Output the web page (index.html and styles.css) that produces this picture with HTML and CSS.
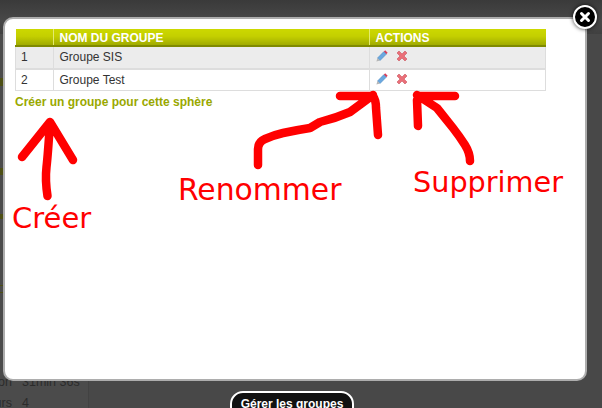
FILE: index.html
```
<!DOCTYPE html>
<html lang="fr">
<head>
  <meta charset="UTF-8" />
  <title>Gérer les groupes</title>
  <link rel="stylesheet" href="styles.css">
</head>
<body>
  <!-- page behind the overlay -->
  <div class="page">
    <div class="page-top"></div>
    <div class="page-body">
      <div class="sidebar">
        <div class="mark mark-a"></div>
        <div class="mark mark-b"></div>
        <div class="mark mark-c"></div>
        <div class="mark mark-d"></div>
        <div class="mark mark-e"></div>
        <div class="stat stat-first"><span class="stat-label">Session</span><span>31min 36s</span></div>
        <div class="stat"><span class="stat-label">Visiteurs</span><span>4</span></div>
      </div>
      <div class="main">
        <a href="#" class="manage-button">Gérer les groupes</a>
      </div>
    </div>
  </div>

  <div class="modal">
    <table class="groups">
      <thead>
        <tr>
          <th class="col-id"></th>
          <th class="col-name">NOM DU GROUPE</th>
          <th>ACTIONS</th>
        </tr>
      </thead>
      <tbody>
        <tr class="odd">
          <td>1</td>
          <td>Groupe SIS</td>
          <td class="actions">
            <svg class="icon" viewBox="0 0 12 12"><path d="M9.200 .3l2.500 2.500-1.500 1.500-2.500-2.500z" fill="#d8405c"/><path d="M7.700 1.800l2.500 2.500-6.200 6.200-2.500-2.500z" fill="#6aa8e0" stroke="#4a86c0" stroke-width=".6"/><path d="M1.500 8l2.500 2.500-3.600 1.100z" fill="#b5b5b5"/></svg>
            <svg class="icon" viewBox="0 0 12 12"><path d="M1 3l2-2 3 3 3-3 2 2-3 3 3 3-2 2-3-3-3 3-2-2 3-3z" fill="#ea6f78" stroke="#c9555f" stroke-width=".6"/></svg>
          </td>
        </tr>
        <tr>
          <td>2</td>
          <td>Groupe Test</td>
          <td class="actions">
            <svg class="icon" viewBox="0 0 12 12"><path d="M9.200 .3l2.500 2.500-1.500 1.500-2.500-2.500z" fill="#d8405c"/><path d="M7.700 1.800l2.500 2.500-6.200 6.200-2.500-2.500z" fill="#6aa8e0" stroke="#4a86c0" stroke-width=".6"/><path d="M1.500 8l2.500 2.500-3.600 1.100z" fill="#b5b5b5"/></svg>
            <svg class="icon" viewBox="0 0 12 12"><path d="M1 3l2-2 3 3 3-3 2 2-3 3 3 3-2 2-3-3-3 3-2-2 3-3z" fill="#ea6f78" stroke="#c9555f" stroke-width=".6"/></svg>
          </td>
        </tr>
      </tbody>
    </table>
    <a href="#" class="create-link">Créer un groupe pour cette sphère</a>
  </div>

  <!-- hand drawn notes on top of the screenshot -->
  <svg class="scribble" viewBox="0 0 602 408">
    <path d="M47.500 196Q45 180 46.500 167T50 122M22 157L50 122L73 160"/>
    <path d="M258 165V149Q258 142 265 139Q274 135 283 133Q297 130 310 128Q315 125 320 122Q336 118 350 112L373 95M340 96H373Q376 100 376 108L378 135"/>
    <path d="M470 161Q470 153 465 145Q460 137 453 128Q445 118 437 108L417 95M455 96H420L417 100L418 126"/>
  </svg>
  <span class="note note-create">Créer</span>
  <span class="note note-rename">Renommer</span>
  <span class="note note-delete">Supprimer</span>

  <a href="#" class="close-button">
    <svg viewBox="0 0 12 12"><path d="M2.500 2.500L9.500 9.500M9.500 2.500L2.500 9.500"/></svg>
  </a>
</body>
</html>
```

FILE: styles.css
```
html, body {
  margin: 0;
  padding: 0;
  height: 408px;
  overflow: hidden;
}

body {
  font-family: 'Liberation Sans', Arial, sans-serif;
  font-size: 12px;
  background-color: #484848;
  color: #333;
}

.page {
  display: flex;
  flex-direction: column;
  height: 408px;
}

.page-top {
  height: 34px;
  flex: none;
  background: linear-gradient(to bottom, #3a3a3a, #484848 60%, #404040);
}

.page-body {
  flex: 1;
  display: flex;
  min-height: 0;
}

.sidebar {
  width: 89px;
  flex: none;
  box-sizing: border-box;
  background-color: #4b4b4b;
  border-right: 1px solid #424242;
}

.mark {
  width: 3px;
  background-color: #4d4f14;
}

.mark-a {
  height: 8px;
  margin-top: 44px;
}

.mark-b {
  height: 7px;
  margin-top: 82px;
}

.mark-c {
  height: 5px;
  margin-top: 39px;
}

.mark-d {
  height: 1px;
  margin-top: 66px;
}

.mark-e {
  height: 1px;
  margin-top: 6px;
}

.stat {
  display: flex;
  gap: 10px;
  height: 21px;
  line-height: 21px;
  font-size: 12.500px;
  color: #2b2b2b;
}

.stat-first {
  margin-top: 79px;
}

.stat-label {
  width: 12px;
  flex: none;
  display: flex;
  justify-content: flex-end;
  white-space: nowrap;
}

.main {
  flex: 1;
  display: flex;
  justify-content: center;
  padding-top: 357px;
  padding-right: 107px;
}

.manage-button {
  display: block;
  box-sizing: border-box;
  width: 124px;
  height: 30px;
  line-height: 22px;
  text-align: center;
  font-weight: bold;
  color: #fff;
  text-decoration: none;
  background-color: #111;
  border: 2px solid #fff;
  border-radius: 13px;
}

.modal {
  position: absolute;
  left: 3px;
  top: 17px;
  width: 584px;
  height: 364px;
  box-sizing: border-box;
  padding: 10px;
  background-color: #fff;
  border: 2px solid #adadad;
  border-radius: 10px;
}

.groups {
  width: 531px;
  border-collapse: collapse;
  table-layout: fixed;
}

.groups th {
  height: 15px;
  padding: 1px 5px 0 6px;
  text-align: left;
  font-weight: bold;
  color: #fff;
  background: linear-gradient(to bottom, #ccd800, #c4cf00 45%, #a0ab00);
  border-bottom: 2px solid #7f8a00;
  border-left: 1px solid #e4ea70;
}

.groups th:first-child {
  border-left: none;
}

.col-id {
  width: 26px;
}

.col-name {
  width: 304px;
}

.groups td {
  height: 20px;
  padding: 0 5px 0 6px;
  color: #333;
  border: 1px solid #ddd;
  border-top-width: 2px;
}

.groups tbody tr:first-child td {
  height: 20px;
  padding-bottom: 1px;
  border-top: none;
}

.groups td:first-child {
  padding-left: 5px;
}

.odd td {
  background-color: #ececec;
}

.groups .actions {
  padding-bottom: 0;
  font-size: 0;
  vertical-align: top;
}

.icon {
  width: 12px;
  height: 12px;
  margin: 3px 8px 0 0;
}

.create-link {
  display: block;
  margin-top: 4px;
  font-weight: bold;
  color: #99a800;
  text-decoration: none;
}

.scribble {
  position: absolute;
  left: 0;
  top: 0;
  width: 602px;
  height: 408px;
  fill: none;
  stroke: #ff0000;
  stroke-width: 8.500;
  stroke-linecap: round;
  stroke-linejoin: round;
}

.note {
  position: absolute;
  font-family: 'DejaVu Sans', sans-serif;
  line-height: 34px;
  color: #ff0000;
}

.note-create {
  left: 12px;
  top: 201px;
  font-size: 29px;
}

.note-rename {
  left: 178px;
  top: 173px;
  font-size: 29.800px;
}

.note-delete {
  left: 413px;
  top: 165px;
  font-size: 28.700px;
}

.close-button {
  position: absolute;
  left: 573px;
  top: 5px;
  width: 24px;
  height: 24px;
  box-sizing: border-box;
  padding: 4px;
  background-color: #000;
  border: 2px solid #fff;
  border-radius: 50%;
  box-shadow: 0 0 4px rgba(0, 0, 0, 0.8);
}

.close-button svg {
  display: block;
  fill: none;
  stroke: #fff;
  stroke-width: 3;
  stroke-linecap: round;
}
```
